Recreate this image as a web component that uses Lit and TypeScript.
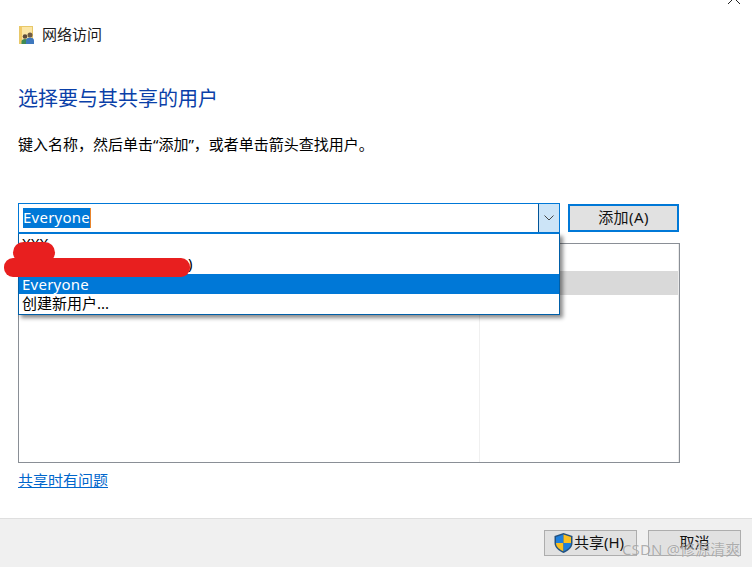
import { LitElement, html, css } from "lit";
import { customElement } from "lit/decorators.js";

@customElement("app-root")
export class AppRoot extends LitElement {
  static styles = css`
    :host { display: block; width: 752px; height: 567px; position: relative; overflow: hidden; background: #fff; font-family: "Noto Sans", "Noto Sans CJK SC", sans-serif; color: #000; }
    .page { display: flex; flex-direction: column; height: 567px; }
    .body { flex: 1; display: flex; flex-direction: column; padding: 0 72px 0 18px; min-height: 0; }
    .head { display: flex; align-items: center; gap: 7px; margin: 25px 0 0 1px; height: 20px; font-size: 15px; line-height: 20px; color: #1a1a1a; }
    .head svg { display: block; }
    .head span { position: relative; top: -1px; }
    h1 { margin: 40px 0 0; font-size: 20px; font-weight: 400; line-height: 28px; color: #0a3fa8; }
    .hint { margin: 20px 0 0; font-size: 15px; line-height: 22px; white-space: nowrap; }
    .row { display: flex; gap: 8px; margin-top: 48px; height: 30px; align-items: center; position: relative; }
    .combo { width: 542px; height: 30px; box-sizing: border-box; border: 1px solid #0078d7; display: flex; align-items: stretch; }
    .input { flex: 1; display: flex; align-items: center; padding-left: 4px; }
    .sel { background: #0078d7; color: #fff; font-size: 15px; height: 20px; line-height: 18px; letter-spacing: .25px; border-right: 1px solid #e8842c; }
    .arrow { width: 20px; background: #cce4f7; border-left: 1px solid #005499; display: flex; align-items: center; justify-content: center; }
    .add { width: 111px; height: 28px; box-sizing: border-box; border: 2px solid #0078d7; background: #e1e1e1; display: flex; align-items: center; justify-content: center; font-size: 15px; line-height: 20px; padding-bottom: 2px; letter-spacing: .4px; color: #111; }
    .list { margin-top: 10px; height: 220px; box-sizing: border-box; border: 1px solid #8a8f96; display: flex; width: 662px; }
    .c1 { width: 460px; border-right: 1px solid #f0f0f0; }
    .c2 { flex: 1; padding-top: 27px; border-right: 1px solid #ececec; }
    .band { height: 24px; background: #d9d9d9; }
    .link { margin-top: 7px; font-size: 15px; line-height: 20px; color: #0066cc; text-decoration: underline; align-self: flex-start; }
    .foot { height: 49px; box-sizing: border-box; background: #f0f0f0; border-top: 1px solid #dfdfdf; display: flex; justify-content: flex-end; gap: 11px; padding: 11px 11px 0 0; flex: none; }
    .btn { width: 93px; height: 26px; box-sizing: border-box; border: 1px solid #adadad; background: #e1e1e1; display: flex; align-items: center; justify-content: center; gap: 1px; font-size: 15px; line-height: 20px; padding-bottom: 2px; color: #111; }
    .btn svg { flex: none; margin: 2px 0 0 -3px; }
    .drop { position: absolute; left: 18px; top: 233px; width: 542px; height: 82px; box-sizing: border-box; border: 1px solid #005fa8; border-top-color: #0078d7; background: #fff; box-shadow: 3px 3px 4px rgba(0,0,0,.45); font-size: 15px; line-height: 20px; }
    .opt { height: 20px; padding-left: 3px; white-space: nowrap; line-height: 19px; }
    .opt.tail { padding-left: 169px; }
    .opt.on { background: #0078d7; color: #fff; letter-spacing: .25px; line-height: 21px; }
    .blob { position: absolute; background: #e81f1f; }
    .b1 { left: 13px; top: 242px; width: 42px; height: 21px; border-radius: 11px; }
    .b2 { left: 4px; top: 258px; width: 186px; height: 19px; border-radius: 9px; }
    .close { position: absolute; left: 727px; top: -1px; display: block; }
    .mark { position: absolute; left: 622px; top: 539px; font-size: 15px; line-height: 20px; letter-spacing: .1px; color: rgba(125,125,125,.6); white-space: nowrap; text-shadow: 0 0 1px rgba(255,255,255,.7); }
  `;

  render() {
    return html`
      <div class="page">
        <div class="body">
          <div class="head">
            <svg width="16" height="19" viewBox="0 0 16 19">
              <rect x=".5" y=".5" width="13" height="17" fill="#fbe6a6" stroke="#e8c869"/>
              <rect x="1" y="1" width="2" height="16" fill="#f2c966"/>
              <circle cx="6" cy="10.500" r="2.300" fill="#5b4a3a"/>
              <path d="M2.500 18v-2.500c0-1.500 1.500-2.500 3.500-2.500s3 1 3 2.500V18z" fill="#3f8a55"/>
              <circle cx="11" cy="9" r="2.500" fill="#6f5b45"/>
              <path d="M7 18v-3.500c0-2 1.800-3 4-3s4 1 4 3V18z" fill="#3e78bd"/>
            </svg>
            <span>网络访问</span>
          </div>
          <h1>选择要与其共享的用户</h1>
          <p class="hint">键入名称，然后单击“添加”，或者单击箭头查找用户。</p>
          <div class="row">
            <div class="combo">
              <div class="input"><span class="sel">Everyone</span></div>
              <div class="arrow">
                <svg width="10" height="6" viewBox="0 0 10 6"><path d="M.5.5 5 5 9.500.5" fill="none" stroke="#444" stroke-width="1"/></svg>
              </div>
            </div>
            <div class="add">添加(A)</div>
          </div>
          <div class="list">
            <div class="c1"></div>
            <div class="c2"><div class="band"></div></div>
          </div>
          <div class="link">共享时有问题</div>
        </div>
        <div class="foot">
          <div class="btn">
            <svg width="19" height="20" viewBox="0 0 19 20">
              <path d="M9.500 0 18.500 3V10c0 4.800-4.500 8-9 10C5 18 .5 14.800.5 10V3z" fill="#24527f"/>
              <path d="M9.500 1.500V10H2V4z" fill="#1f7fdc"/>
              <path d="M9.500 1.500 17 4V10H9.500z" fill="#fbbf1f"/>
              <path d="M2 10H9.500v8.300C6 16.700 2 14.300 2 10z" fill="#fbbf1f"/>
              <path d="M9.500 10H17c0 4.300-4 6.700-7.500 8.300z" fill="#1f7fdc"/>
            </svg>
            <span>共享(H)</span>
          </div>
          <div class="btn">取消</div>
        </div>
      </div>
      <div class="drop">
        <div class="opt">XXX</div>
        <div class="opt tail">)</div>
        <div class="opt on">Everyone</div>
        <div class="opt">创建新用户...</div>
      </div>
      <div class="blob b1"></div>
      <div class="blob b2"></div>
      <svg class="close" width="14" height="6" viewBox="0 0 14 6"><path d="M1 5 5 1M13 5 9 1" stroke="#222" fill="none"/></svg>
      <div class="mark">CSDN @修源清爽</div>
    `;
  }
}
